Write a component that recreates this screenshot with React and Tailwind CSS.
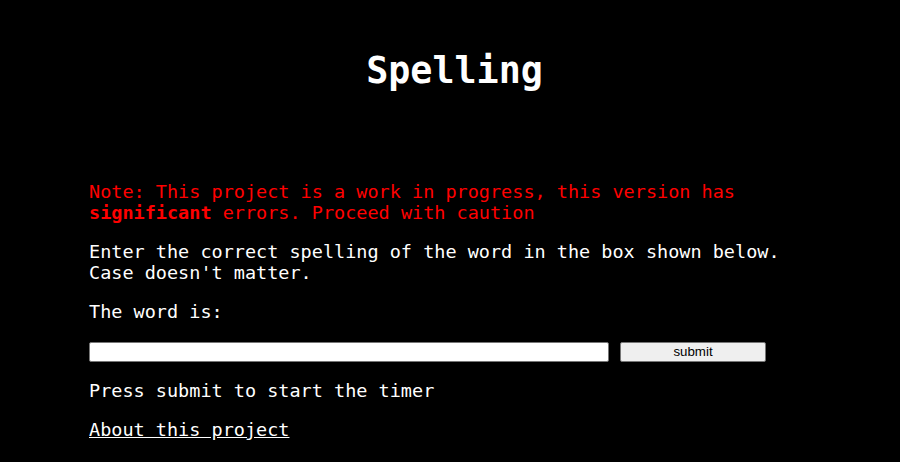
export default function App() {
  return (
    <div
      className="min-h-[462px] bg-black text-white pl-[89px] pr-[80px] pb-[20px]"
      style={{ fontFamily: '"DejaVu Sans Mono", "Liberation Mono", monospace' }}
    >
      <h1 className="text-center text-[36.7px] font-bold leading-[44px] pt-[49px] m-0">Spelling</h1>
      <p className="mt-[88px] text-[18.5px] leading-[21px] text-[#ff0000]">
        Note: This project is a work in progress, this version has{" "}
        <b className="font-bold">significant</b> errors. Proceed with caution
      </p>
      <p className="mt-[18px] text-[18.5px] leading-[21px]">
        Enter the correct spelling of the word in the box shown below. Case doesn't matter.
      </p>
      <p className="mt-[18px] text-[18.5px] leading-[21px]">The word is:</p>
      <div className="mt-[20px] flex items-center gap-[11px]">
        <input
          type="text"
          className="w-[520px] h-[20px] bg-white border border-[#767676] rounded-[2px] text-black outline-none"
        />
        <button
          className="w-[146px] h-[20px] bg-[#efefef] border border-[#767676] rounded-[2px] text-black text-[13.3px] leading-none"
          style={{ fontFamily: '"Liberation Sans", Arial, sans-serif' }}
        >
          submit
        </button>
      </div>
      <p className="mt-[18px] text-[18.5px] leading-[21px]">Press submit to start the timer</p>
      <p className="mt-[18px] text-[18.5px] leading-[21px]">
        <a href="#" className="underline text-white">About this project</a>
      </p>
    </div>
  );
}
